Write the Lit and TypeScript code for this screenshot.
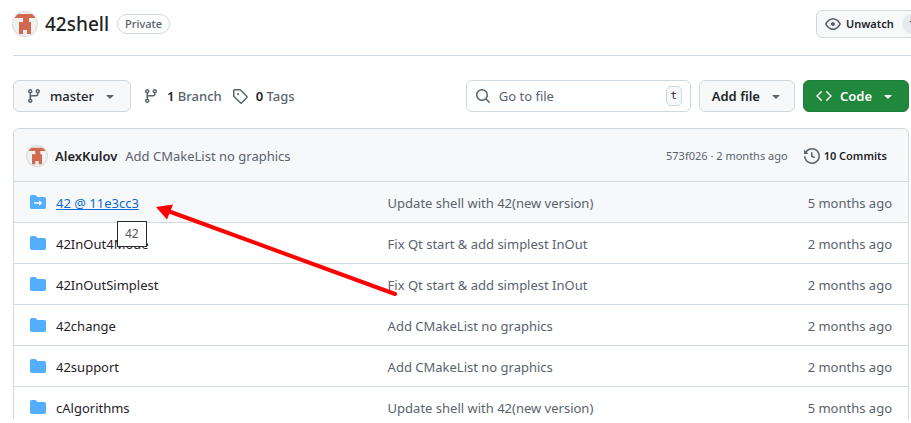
import { LitElement, html, svg, css } from "lit";
import { customElement, property } from "lit/decorators.js";

const ICONS: Record<string, string> = {
  branch:
    "M9.5 3.25a2.25 2.25 0 1 1 3 2.122V6A2.5 2.5 0 0 1 10 8.5H6a1 1 0 0 0-1 1v1.128a2.251 2.251 0 1 1-1.5 0V5.372a2.25 2.25 0 1 1 1.5 0v1.836A2.493 2.493 0 0 1 6 7h4a1 1 0 0 0 1-1v-.628A2.25 2.25 0 0 1 9.5 3.25Zm-6 0a.75.75 0 1 0 1.5 0 .75.75 0 0 0-1.5 0Zm8.25-.75a.75.75 0 1 0 0 1.5.75.75 0 0 0 0-1.5ZM4.25 12a.75.75 0 1 0 0 1.5.75.75 0 0 0 0-1.5Z",
  tag: "M1 7.775V2.75C1 1.784 1.784 1 2.75 1h5.025c.464 0 .91.184 1.238.513l6.25 6.25a1.75 1.75 0 0 1 0 2.474l-5.026 5.026a1.75 1.75 0 0 1-2.474 0l-6.25-6.25A1.752 1.752 0 0 1 1 7.775Zm1.5 0c0 .066.026.13.073.177l6.25 6.25a.25.25 0 0 0 .354 0l5.025-5.025a.25.25 0 0 0 0-.354l-6.25-6.25a.25.25 0 0 0-.177-.073H2.75a.25.25 0 0 0-.25.25ZM6 5a1 1 0 1 1 0 2 1 1 0 0 1 0-2Z",
  eye: "M8 2c1.981 0 3.671.992 4.933 2.078 1.27 1.091 2.187 2.345 2.637 3.023a1.62 1.62 0 0 1 0 1.798c-.45.678-1.367 1.932-2.637 3.023C11.67 13.008 9.981 14 8 14c-1.981 0-3.671-.992-4.933-2.078C1.797 10.83.88 9.576.43 8.898a1.62 1.62 0 0 1 0-1.798c.45-.677 1.367-1.931 2.637-3.022C4.33 2.992 6.019 2 8 2ZM1.679 7.932a.12.12 0 0 0 0 .136c.411.622 1.241 1.75 2.366 2.717C5.176 11.758 6.527 12.5 8 12.5c1.473 0 2.825-.742 3.955-1.715 1.124-.967 1.954-2.096 2.366-2.717a.12.12 0 0 0 0-.136c-.412-.621-1.242-1.75-2.366-2.717C10.824 4.242 9.473 3.5 8 3.5c-1.473 0-2.825.742-3.955 1.715-1.124.967-1.954 2.096-2.366 2.717ZM8 10a2 2 0 1 1-.001-3.999A2 2 0 0 1 8 10Z",
  search:
    "M10.68 11.74a6 6 0 0 1-7.922-8.982 6 6 0 0 1 8.982 7.922l3.04 3.04a.749.749 0 0 1-.326 1.275.749.749 0 0 1-.734-.215ZM11.5 7a4.499 4.499 0 1 0-8.997 0A4.499 4.499 0 0 0 11.5 7Z",
  code: "m11.28 3.22 4.25 4.25a.75.75 0 0 1 0 1.06l-4.25 4.25a.749.749 0 0 1-1.275-.326.749.749 0 0 1 .215-.734L13.94 8l-3.72-3.72a.749.749 0 0 1 .326-1.275.749.749 0 0 1 .734.215Zm-6.56 0a.751.751 0 0 1 1.042.018.751.751 0 0 1 .018 1.042L2.06 8l3.72 3.72a.749.749 0 0 1-.326 1.275.749.749 0 0 1-.734-.215L.47 8.53a.75.75 0 0 1 0-1.06Z",
  caret:
    "m4.427 7.427 3.396 3.396a.25.25 0 0 0 .354 0l3.396-3.396A.25.25 0 0 0 11.396 7H4.604a.25.25 0 0 0-.177.427Z",
  history:
    "m.427 1.927 1.215 1.215a8.002 8.002 0 1 1-1.6 5.685.75.75 0 1 1 1.493-.154 6.5 6.5 0 1 0 1.18-4.458l1.358 1.358A.25.25 0 0 1 3.896 6H.25A.25.25 0 0 1 0 5.75V2.104a.25.25 0 0 1 .427-.177ZM7.75 4a.75.75 0 0 1 .75.75v2.992l2.028.812a.75.75 0 0 1-.557 1.392l-2.5-1A.751.751 0 0 1 7 8.25v-3.5A.75.75 0 0 1 7.75 4Z",
  folder:
    "M1.75 1A1.75 1.75 0 0 0 0 2.75v10.5C0 14.216.784 15 1.75 15h12.5A1.75 1.75 0 0 0 16 13.25v-8.5A1.75 1.75 0 0 0 14.25 3H7.5a.25.25 0 0 1-.2-.1l-.9-1.2C6.07 1.26 5.55 1 5 1H1.75Z",
};

@customElement("oct-icon")
class OctIcon extends LitElement {
  @property() name = "";
  static styles = css`
    :host { display: block; width: 16px; height: 16px; flex: none; }
    .svg { display: block; width: 100%; height: 100%; fill: currentColor; overflow: visible; }
    .arrow { fill: none; stroke: #fff; stroke-width: 1.5; }
    .head { fill: #fff; }
  `;
  render() {
    const sub = this.name === "submodule";
    return html`<svg class="svg" viewBox="0 0 16 16" aria-hidden="true">
      <path d=${ICONS[sub ? "folder" : this.name] ?? ""}></path>
      ${sub
        ? svg`<path class="arrow" d="M4 9h6"></path><path class="head" d="M9 6.2v5.6L12.2 9z"></path>`
        : null}
    </svg>`;
  }
}

@customElement("user-avatar")
class UserAvatar extends LitElement {
  static styles = css`
    :host { display: block; flex: none; border-radius: 50%; overflow: hidden; background: #f0f0f0; box-shadow: 0 0 0 1px #d9dcdf; }
    .svg { display: block; width: 100%; height: 100%; fill: #d0694f; }
  `;
  render() {
    return html`<svg class="svg" viewBox="0 0 24 24" aria-hidden="true">
      <path d="M2 2h20v4h-6v4h2v12h-4v-4h-4v4H6V10h4V6H2z"></path>
    </svg>`;
  }
}

interface Entry {
  name: string;
  message: string;
  age: string;
  submodule?: boolean;
}

const ENTRIES: Entry[] = [
  { name: "42 @ 11e3cc3", message: "Update shell with 42(new version)", age: "5 months ago", submodule: true },
  { name: "42InOut4Mode", message: "Fix Qt start & add simplest InOut", age: "2 months ago" },
  { name: "42InOutSimplest", message: "Fix Qt start & add simplest InOut", age: "2 months ago" },
  { name: "42change", message: "Add CMakeList no graphics", age: "2 months ago" },
  { name: "42support", message: "Add CMakeList no graphics", age: "2 months ago" },
  { name: "cAlgorithms", message: "Update shell with 42(new version)", age: "5 months ago" },
];

@customElement("app-root")
class AppRoot extends LitElement {
  static styles = css`
    :host {
      display: block; position: relative; overflow: hidden; background: #fff; color: #1f2328;
      font: 13px/20px "Noto Sans", sans-serif;
    }
    * { box-sizing: border-box; }
    a { color: inherit; text-decoration: none; }
    button, input { font: inherit; color: inherit; }
    .page { padding: 0 2px 0 13px; }
    .header { display: flex; align-items: center; gap: 8px; height: 56px; padding-bottom: 8px; margin-right: -2px; border-bottom: 1px solid #d1d9e0; }
    .avatar { width: 24px; height: 24px; }
    .small { width: 20px; height: 20px; }
    .title { margin: 0; font-size: 19px; line-height: 28px; font-weight: 500; }
    .pill { border: 1px solid #d1d9e0; border-radius: 10px; padding: 0 7px; font-size: 11px; line-height: 18px; font-weight: 500; color: #59636e; }
    .actions { margin-left: auto; width: 95px; overflow: hidden; }
    .btn {
      display: flex; align-items: center; gap: 8px; height: 32px; padding: 0 12px; white-space: nowrap;
      border: 1px solid #d1d9e0; border-radius: 6px; background: #f6f8fa; font-weight: 600;
    }
    .btn oct-icon, .muted { color: #59636e; }
    .watch { height: 28px; padding: 0 8px; font-size: 11px; gap: 5px; }
    .count { border-radius: 10px; padding: 0 7px; background: #e6eaef; margin-left: 3px; font-weight: 500; }
    .toolbar { display: flex; align-items: center; gap: 8px; padding: 24px 0 16px; }
    .ref { font-weight: 500; }
    .add { padding-right: 10px; }
    .stats { display: flex; gap: 10px; margin-left: 4px; }
    .stat { display: flex; align-items: center; gap: 8px; font-weight: 500; color: #59636e; }
    .stat b { font-weight: 600; color: #1f2328; }
    .search {
      display: flex; align-items: center; gap: 8px; width: 225px; height: 32px; margin-left: auto; padding: 0 8px;
      border: 1px solid #d1d9e0; border-radius: 6px; color: #59636e;
    }
    .field { flex: 1; min-width: 0; border: 0; outline: 0; padding: 0; background: none; }
    .field::placeholder { color: #59636e; opacity: 1; }
    .key { border: 1px solid #d1d9e0; border-radius: 5px; background: #f6f8fa; color: #1f2328; width: 16px; text-align: center; font: 11px/18px "DejaVu Sans Mono", monospace; }
    .green { background: #1f883d; border-color: #1a7f37; color: #fff; }
    .btn.green oct-icon { color: #fff; }
    .box { border: 1px solid #d1d9e0; border-bottom: 0; border-radius: 6px 6px 0 0; overflow: hidden; }
    .commit { display: flex; align-items: center; gap: 8px; padding: 17px 21px 15px 13px; background: #f6f8fa; }
    .author { font-weight: 600; }
    .meta { margin-left: auto; font-size: 11px; }
    .commits { display: flex; align-items: center; gap: 4px; margin-left: 8px; font-size: 11px; font-weight: 600; }
    .commits oct-icon { color: #59636e; }
    .files { width: 100%; table-layout: fixed; border-collapse: collapse; }
    .files td { padding: 11px 16px 9px; border-top: 1px solid #d1d9e0; white-space: nowrap; }
    .files tr:last-child td { padding-bottom: 1px; }
    .files .date { width: 20%; text-align: right; }
    .files .name { width: 40%; }
    .entry { display: flex; align-items: center; gap: 10px; }
    .entry oct-icon { color: #54aeff; margin-top: -2px; }
    .hover { background: #f6f8fa; }
    .hover .link { color: #0969da; text-decoration: underline; }
    .tip { position: absolute; left: 117px; top: 221px; border: 1px solid #2b2b2b; background: #fff; padding: 2px 7px; font-size: 12px; color: #575757; }
    .pointer { position: absolute; left: 150px; top: 195px; width: 250px; height: 105px; fill: #f00; stroke: #f00; pointer-events: none; }
    .shaft { stroke-width: 4; stroke-linecap: round; }
  `;

  render() {
    return html`<main class="page">
        <header class="header">
          <user-avatar class="avatar"></user-avatar>
          <h1 class="title"><a href="#">42shell</a></h1>
          <span class="pill">Private</span>
          <div class="actions">
            <button class="btn watch"><oct-icon name="eye"></oct-icon>Unwatch<span class="count">1</span></button>
          </div>
        </header>
        <div class="toolbar">
          <button class="btn ref"><oct-icon name="branch"></oct-icon>master<oct-icon name="caret"></oct-icon></button>
          <div class="stats">
            <a class="stat" href="#"><oct-icon name="branch"></oct-icon><span><b>1</b> Branch</span></a>
            <a class="stat" href="#"><oct-icon name="tag"></oct-icon><span><b>0</b> Tags</span></a>
          </div>
          <label class="search">
            <oct-icon name="search"></oct-icon>
            <input class="field" type="text" placeholder="Go to file" aria-label="Go to file" />
            <kbd class="key">t</kbd>
          </label>
          <button class="btn add">Add file<oct-icon name="caret"></oct-icon></button>
          <button class="btn green"><oct-icon name="code"></oct-icon>Code<oct-icon name="caret"></oct-icon></button>
        </div>
        <section class="box">
          <div class="commit">
            <user-avatar class="small"></user-avatar>
            <a class="author" href="#">AlexKulov</a>
            <a class="muted" href="#">Add CMakeList no graphics</a>
            <span class="meta muted"><a href="#">573f026</a> · 2 months ago</span>
            <a class="commits" href="#"><oct-icon name="history"></oct-icon>10 Commits</a>
          </div>
          <table class="files">
            <tbody>
              ${ENTRIES.map(
                (e) => html`<tr class=${e.submodule ? "hover" : ""}>
                  <td class="name">
                    <div class="entry">
                      <oct-icon name=${e.submodule ? "submodule" : "folder"}></oct-icon>
                      <a class="link" href="#">${e.name}</a>
                    </div>
                  </td>
                  <td class="muted"><a href="#">${e.message}</a></td>
                  <td class="date muted">${e.age}</td>
                </tr>`,
              )}
            </tbody>
          </table>
        </section>
      </main>
      <div class="tip" role="tooltip">42</div>
      <svg class="pointer" viewBox="0 0 250 105" aria-hidden="true">
        <path class="shaft" d="M18 16L245 99"></path>
        <path stroke="none" d="M6 12L23 9.500L17 24.500z"></path>
      </svg>`;
  }
}
